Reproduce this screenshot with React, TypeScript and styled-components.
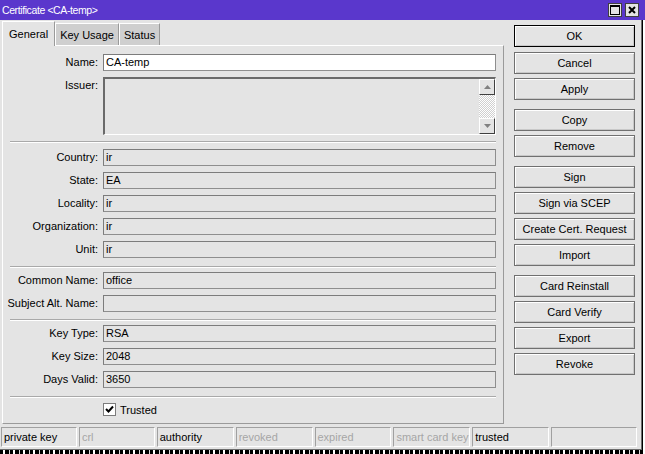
import React from "react";
import styled, { createGlobalStyle } from "styled-components";

const Global = createGlobalStyle`
  html, body { margin: 0; padding: 0; background: #1a1a1a; }
  body { font-family: "Liberation Sans", Arial, sans-serif; font-size: 11px; color: #000; }
  * { box-sizing: border-box; }
`;

const Screen = styled.div`
  width: 645px;
  height: 454px;
  display: flex;
  flex-direction: column;
  overflow: hidden;
  background: repeating-linear-gradient(90deg, #000 0 3px, #fff 3px 5px, #000 5px 9px, #ddd 9px 10px);
`;

const Window = styled.div`
  height: 450px;
  display: flex;
  flex-direction: column;
  background: #e4e4e4;
  border-right: 1px solid #6c6c6c;
  margin-right: 3px;
  border-bottom: 1px solid #6c6c6c;
`;

const TitleBar = styled.div`
  height: 20px;
  flex: none;
  background: #5a37cc;
  color: #fff;
  display: flex;
  align-items: center;
  padding: 0 6px 0 2px;
  margin-right: -4px;
`;

const TitleText = styled.div`
  flex: 1;
  font-family: "Liberation Sans", Arial, sans-serif;
  font-size: 10.5px;
  letter-spacing: -0.4px;
  line-height: 20px;
`;

const TitleButton = styled.div`
  width: 14px;
  height: 14px;
  background: #e4e4e4;
  border: 1px solid #404040;
  display: flex;
  align-items: center;
  justify-content: center;
  margin-left: 3px;
`;

const Body = styled.div`
  flex: 1;
  display: flex;
  min-height: 0;
`;

const TabArea = styled.div`
  width: 504px;
  padding-left: 2px;
  display: flex;
  flex-direction: column;
`;

const TabStrip = styled.div`
  display: flex;
  align-items: flex-end;
  height: 25px;
`;

const Tab = styled.div<{ $active?: boolean }>`
  height: ${(p) => (p.$active ? 25 : 22)}px;
  padding: 0 ${(p) => (p.$active ? 6 : 4)}px;
  display: flex;
  align-items: center;
  background: ${(p) => (p.$active ? "#e4e4e4" : "#cfcfcf")};
  border-top: 1px solid #fff;
  border-left: 1px solid #fff;
  border-right: 1px solid #9a9a9a;
  margin-bottom: ${(p) => (p.$active ? -1 : 0)}px;
  position: relative;
  z-index: ${(p) => (p.$active ? 1 : 0)};
`;

const Panel = styled.div`
  flex: 1;
  border-top: 1px solid #fff;
  border-left: 1px solid #fff;
  border-right: 1px solid #9a9a9a;
  border-bottom: 1px solid #9a9a9a;
  padding: 8px 7px 0 4px;
  display: flex;
  flex-direction: column;
`;

const Row = styled.div<{ $top?: number }>`
  display: grid;
  grid-template-columns: 91px 1fr;
  column-gap: 5px;
  align-items: start;
  margin-top: ${(p) => p.$top ?? 6}px;
`;

const Label = styled.div`
  text-align: right;
  line-height: 17px;
  white-space: nowrap;
`;

const Field = styled.div<{ $white?: boolean }>`
  height: 17px;
  background: ${(p) => (p.$white ? "#fff" : "#e4e4e4")};
  border: 1px solid #7c7c7c;
  border-bottom-color: #8e8e8e;
  border-right-color: #8e8e8e;
  padding-left: 2px;
  line-height: 15px;
  white-space: nowrap;
`;

const TextArea = styled.div`
  height: 58px;
  border-top: 2px solid #6a6a6a;
  border-left: 2px solid #6a6a6a;
  border-right: 1px solid #fff;
  border-bottom: 1px solid #fff;
  background: #e4e4e4;
  display: flex;
  justify-content: flex-end;
`;

const ScrollBar = styled.div`
  width: 16px;
  display: flex;
  flex-direction: column;
  background-color: #fff;
  background-image: repeating-conic-gradient(#d0d0d0 0 25%, #fff 0 50%);
  background-size: 2px 2px;
`;

const ScrollButton = styled.div`
  width: 16px;
  height: 16px;
  background: #e4e4e4;
  border-top: 1px solid #fff;
  border-left: 1px solid #fff;
  border-right: 1px solid #404040;
  border-bottom: 1px solid #404040;
  display: flex;
  align-items: center;
  justify-content: center;
`;

const Track = styled.div`
  flex: 1;
`;

const Separator = styled.div<{ $top: number }>`
  margin-top: ${(p) => p.$top}px;
  margin-left: 3px;
  height: 2px;
  border-top: 1px solid #a9a9a9;
  border-bottom: 1px solid #fff;
`;

const CheckRow = styled.div`
  margin-top: 5px;
  margin-left: 96px;
  display: flex;
  align-items: center;
  gap: 4px;
  height: 13px;
`;

const CheckBox = styled.div`
  width: 13px;
  height: 13px;
  background: #fff;
  border: 1px solid #7c7c7c;
  display: flex;
  align-items: center;
  justify-content: center;
`;

const ButtonColumn = styled.div`
  margin-left: 10px;
  padding-top: 5px;
  width: 121px;
  display: flex;
  flex-direction: column;
`;

const Btn = styled.div<{ $default?: boolean; $gap?: number }>`
  height: 22px;
  margin-top: ${(p) => p.$gap ?? 4}px;
  border: 1px solid ${(p) => (p.$default ? "#000" : "#707070")};
  box-shadow: inset 1px 1px 0 #fff, inset -1px -1px 0 #c8c8c8;
  background: #e4e4e4;
  display: flex;
  align-items: center;
  justify-content: center;
  white-space: nowrap;
`;

const StatusBar = styled.div`
  height: 25px;
  flex: none;
  display: flex;
  gap: 2px;
  padding: 3px 4px 1px 1px;
`;

const StatusCell = styled.div<{ $off?: boolean; $w: number }>`
  width: ${(p) => p.$w}px;
  height: 20px;
  border-top: 1px solid #a0a0a0;
  border-left: 1px solid #a0a0a0;
  border-right: 1px solid #fff;
  border-bottom: 1px solid #fff;
  color: ${(p) => (p.$off ? "#a6a6a6" : "#000")};
  padding-left: 2px;
  line-height: 18px;
  white-space: nowrap;
  overflow: hidden;
`;

const Up = () => (
  <svg width="7" height="4" viewBox="0 0 7 4"><path d="M3.5 0 L7 4 L0 4 Z" fill="#808080" /></svg>
);
const Down = () => (
  <svg width="7" height="4" viewBox="0 0 7 4"><path d="M0 0 L7 0 L3.5 4 Z" fill="#808080" /></svg>
);

type F = { label: string; value?: string; white?: boolean; top?: number };

const FormRow = ({ label, value, white, top }: F) => (
  <Row $top={top}>
    <Label>{label}:</Label>
    <Field $white={white}>{value}</Field>
  </Row>
);

const buttons: { t: string; gap?: number; def?: boolean }[] = [
  { t: "OK", def: true, gap: 0 },
  { t: "Cancel", gap: 5 },
  { t: "Apply" },
  { t: "Copy", gap: 9 },
  { t: "Remove" },
  { t: "Sign", gap: 9 },
  { t: "Sign via SCEP" },
  { t: "Create Cert. Request" },
  { t: "Import" },
  { t: "Card Reinstall", gap: 9 },
  { t: "Card Verify" },
  { t: "Export" },
  { t: "Revoke" },
];

const status: { t: string; off?: boolean; w: number }[] = [
  { t: "private key", w: 76 },
  { t: "crl", off: true, w: 76 },
  { t: "authority", w: 77 },
  { t: "revoked", off: true, w: 77 },
  { t: "expired", off: true, w: 77 },
  { t: "smart card key", off: true, w: 77 },
  { t: "trusted", w: 77 },
  { t: "", w: 86 },
];

export default function App() {
  return (
    <>
      <Global />
      <Screen>
        <Window>
          <TitleBar>
            <TitleText>Certificate &lt;CA-temp&gt;</TitleText>
            <TitleButton>
              <svg width="10" height="10" viewBox="0 0 10 10">
                <rect x="0.5" y="0.5" width="9" height="9" fill="none" stroke="#000" />
                <rect x="0" y="0" width="10" height="2" fill="#000" />
              </svg>
            </TitleButton>
            <TitleButton>
              <svg width="8" height="8" viewBox="0 0 8 8">
                <path d="M1 1 L7 7 M7 1 L1 7" stroke="#000" strokeWidth="2" />
              </svg>
            </TitleButton>
          </TitleBar>
          <Body>
            <TabArea>
              <TabStrip>
                <Tab $active>General</Tab>
                <Tab>Key Usage</Tab>
                <Tab>Status</Tab>
              </TabStrip>
              <Panel>
                <FormRow label="Name" value="CA-temp" white top={0} />
                <Row>
                  <Label>Issuer:</Label>
                  <TextArea>
                    <ScrollBar>
                      <ScrollButton><Up /></ScrollButton>
                      <Track />
                      <ScrollButton><Down /></ScrollButton>
                    </ScrollBar>
                  </TextArea>
                </Row>
                <Separator $top={6} />
                <FormRow label="Country" value="ir" />
                <FormRow label="State" value="EA" />
                <FormRow label="Locality" value="ir" />
                <FormRow label="Organization" value="ir" />
                <FormRow label="Unit" value="ir" />
                <Separator $top={8} />
                <FormRow label="Common Name" value="office" top={4} />
                <FormRow label="Subject Alt. Name" value="" />
                <Separator $top={7} />
                <FormRow label="Key Type" value="RSA" top={4} />
                <FormRow label="Key Size" value="2048" />
                <FormRow label="Days Valid" value="3650" />
                <Separator $top={8} />
                <CheckRow>
                  <CheckBox>
                    <svg width="9" height="9" viewBox="0 0 9 9">
                      <path d="M1 4 L3.5 6.5 L8 1.5" stroke="#000" strokeWidth="2" fill="none" />
                    </svg>
                  </CheckBox>
                  Trusted
                </CheckRow>
              </Panel>
            </TabArea>
            <ButtonColumn>
              {buttons.map((b) => (
                <Btn key={b.t} $default={b.def} $gap={b.gap}>{b.t}</Btn>
              ))}
            </ButtonColumn>
          </Body>
          <StatusBar>
            {status.map((s, i) => (
              <StatusCell key={i} $off={s.off} $w={s.w}>{s.t}</StatusCell>
            ))}
          </StatusBar>
        </Window>
      </Screen>
    </>
  );
}
